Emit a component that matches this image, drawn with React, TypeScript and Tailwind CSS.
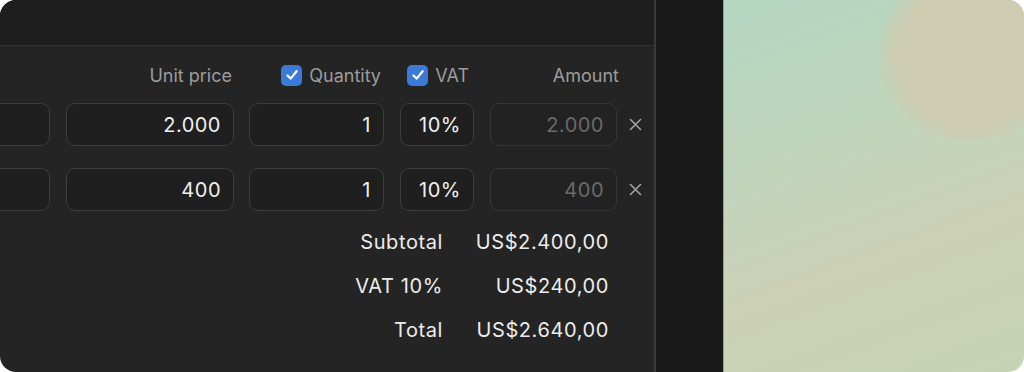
import React from "react";

const font = { fontFamily: 'Inter, "Noto Sans", "Liberation Sans", sans-serif' };

function Check() {
  return (
    <span className="flex h-[21px] w-[21px] shrink-0 items-center justify-center rounded-[5px] bg-[#3b7ad8]">
      <svg width="14" height="14" viewBox="0 0 14 14" fill="none">
        <path d="M2.5 7.4 L5.6 10.6 L11.6 3.2" stroke="#fff" strokeWidth="2.2" strokeLinecap="round" strokeLinejoin="round" />
      </svg>
    </span>
  );
}

function XIcon() {
  return (
    <svg width="13" height="13" viewBox="0 0 13 13" fill="none">
      <path d="M1.5 1.5 L11.5 11.5 M11.5 1.5 L1.5 11.5" stroke="#a3a3a3" strokeWidth="1.6" strokeLinecap="round" />
    </svg>
  );
}

function Row({ price, amount }: { price: string; amount: string }) {
  const box = "h-[43px] flex items-center justify-end rounded-[9px] border border-[#3c3c3c] bg-[#1f1f1f] pr-[12px] text-[20px] tracking-[0.5px]";
  return (
    <div className="flex items-center">
      <div className={box + " w-[50px] rounded-l-none border-l-0"}></div>
      <div className={box + " ml-[16px] w-[168px] text-[#f0f0f0]"}>{price}</div>
      <div className={box + " ml-[15px] w-[135px] text-[#f0f0f0]"}>1</div>
      <div className={box + " ml-[16px] w-[74px] text-[#f0f0f0]"}>10%</div>
      <div className={box + " ml-[16px] w-[127px] border-[#363636] bg-[#222] text-[#6a6a6a]"}>{amount}</div>
      <div className="ml-[12px] flex w-[13px] items-center justify-center">
        <XIcon />
      </div>
    </div>
  );
}

export default function App() {
  return (
    <div className="h-[372px] w-[1024px] bg-white" style={font}>
      <div className="flex h-full w-full overflow-hidden rounded-[16px]">
        <div className="flex w-[656px] flex-col border-r-2 border-[#3a3a3a] bg-[#242424]">
          <div className="h-[46px] border-b border-[#333] bg-[#1e1e1e]"></div>
          <div className="flex flex-1 flex-col pt-[18px]">
            <div className="flex h-[22px] items-center text-[18px] text-[#9c9c9c]">
              <div className="w-[50px]"></div>
              <div className="ml-[16px] flex w-[168px] justify-end pr-[2px]">Unit price</div>
              <div className="ml-[15px] flex w-[135px] items-center justify-end gap-[7px] pr-[3px]">
                <Check />
                <span>Quantity</span>
              </div>
              <div className="ml-[16px] flex w-[74px] items-center justify-end gap-[7px] pr-[5px]">
                <Check />
                <span>VAT</span>
              </div>
              <div className="ml-[16px] flex w-[129px] justify-end">Amount</div>
            </div>
            <div className="mt-[17px] flex flex-col gap-[22px]">
              <Row price="2.000" amount="2.000" />
              <Row price="400" amount="400" />
            </div>
            <div className="mt-[9px] grid grid-cols-[443px_134px] gap-x-[32px] text-[20px] tracking-[0.6px] text-[#ececec]">
              <div className="flex h-[44px] items-center justify-end">Subtotal</div>
              <div className="flex h-[44px] items-center justify-end">US$2.400,00</div>
              <div className="flex h-[44px] items-center justify-end">VAT 10%</div>
              <div className="flex h-[44px] items-center justify-end">US$240,00</div>
              <div className="flex h-[44px] items-center justify-end">Total</div>
              <div className="flex h-[44px] items-center justify-end">US$2.640,00</div>
            </div>
          </div>
        </div>
        <div className="w-[68px] border-r border-[#9a9a9a] bg-[#191919]"></div>
        <div className="relative flex-1 overflow-hidden bg-[linear-gradient(160deg,#b4d6c2_0%,#bfd6bc_35%,#cdd1b6_65%,#c7d4b4_100%)]">
          <div className="absolute right-[-40px] top-[-30px] h-[170px] w-[190px] rounded-full bg-[radial-gradient(circle,#cdcbb0_0%,#cdcbb0_55%,rgba(205,203,176,0)_75%)]"></div>
        </div>
      </div>
    </div>
  );
}
